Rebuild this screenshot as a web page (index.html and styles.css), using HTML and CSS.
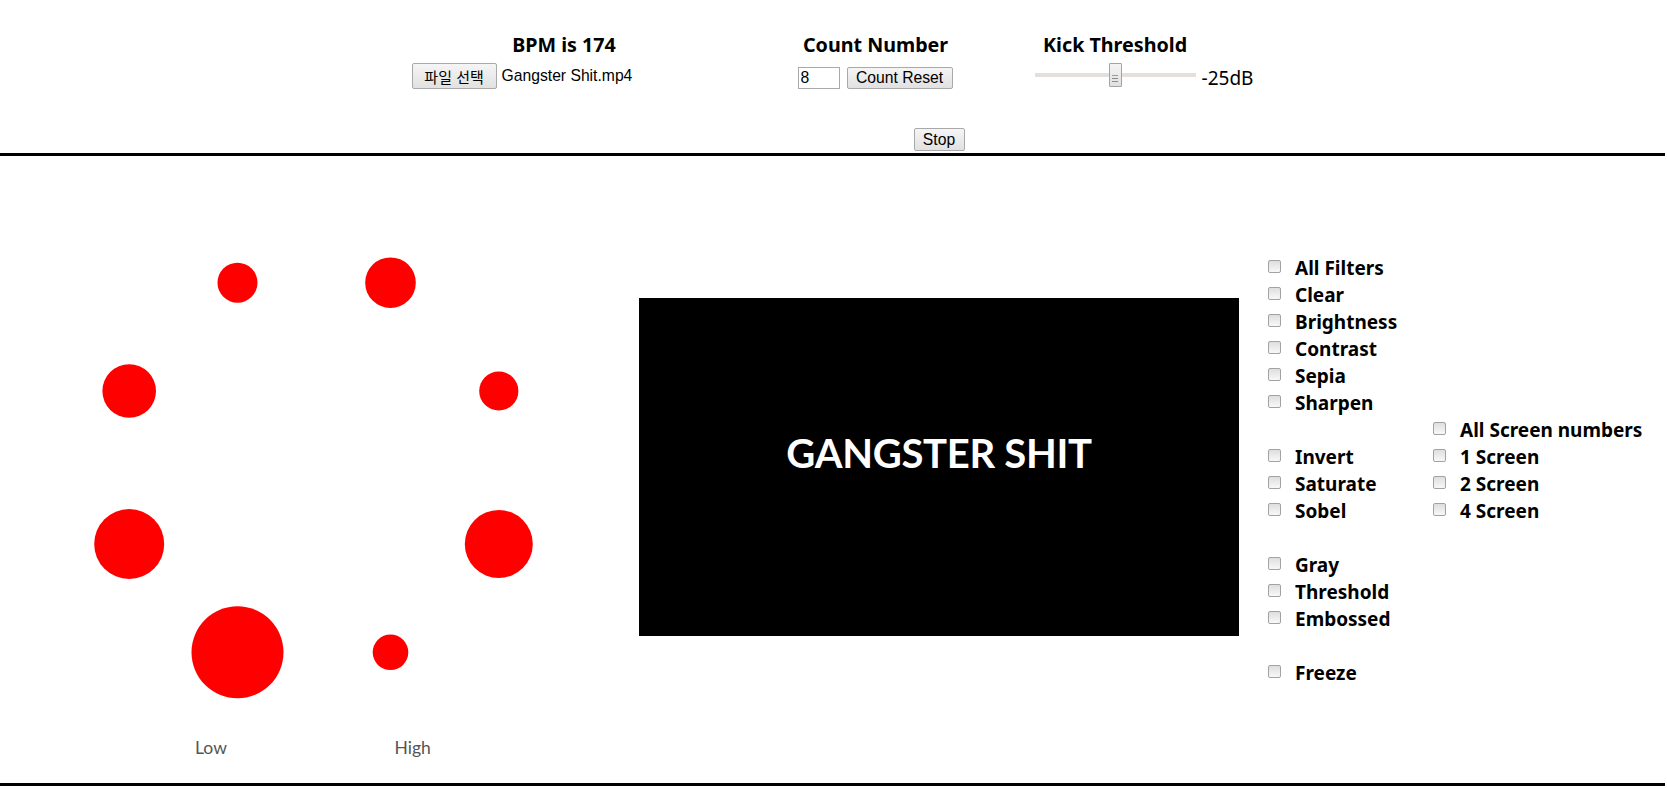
FILE: index.html
```html
<!DOCTYPE html>
<html lang="ko">
<head>
<meta charset="utf-8">
<title>Beat Visualizer</title>
<link rel="stylesheet" href="styles.css">
</head>
<body>
<header class="top">
  <div class="controls">
    <section class="ctl ctl-file">
      <h3 class="ctl-title">BPM is 174</h3>
      <div class="ctl-row">
        <button class="btn btn-file" type="button">파일 선택</button>
        <span class="file-name">Gangster Shit.mp4</span>
      </div>
    </section>
    <section class="ctl ctl-count">
      <h3 class="ctl-title">Count Number</h3>
      <div class="ctl-row">
        <input class="num" type="text" value="8">
        <button class="btn btn-reset" type="button">Count Reset</button>
      </div>
    </section>
    <section class="ctl ctl-kick">
      <h3 class="ctl-title">Kick Threshold</h3>
      <input class="range" type="range" min="-50" max="0" value="-25">
      <span class="db">-25dB</span>
    </section>
  </div>
  <div class="stop-row">
    <button class="btn btn-stop" type="button">Stop</button>
  </div>
</header>

<main class="stage">
  <svg class="viz" viewBox="0 0 639 627" width="639" height="627" role="img" aria-label="Beat visualizer">
    <g class="viz-dots">
      <circle cx="237.5" cy="126.7" r="20"/>
      <circle cx="390.5" cy="126.7" r="25.3"/>
      <circle cx="129.2" cy="235" r="26.8"/>
      <circle cx="498.8" cy="235" r="19.6"/>
      <circle cx="129.2" cy="388" r="35"/>
      <circle cx="498.8" cy="388" r="34"/>
      <circle cx="237.5" cy="496.3" r="46"/>
      <circle cx="390.5" cy="496.3" r="17.8"/>
    </g>
    <text class="viz-label" x="195" y="598">Low</text>
    <text class="viz-label" x="394.5" y="598">High</text>
  </svg>

  <div class="video">
    <span class="video-title">GANGSTER SHIT</span>
  </div>

  <div class="filters">
    <div class="filter-col filter-col-main">
      <div class="group">
        <label class="opt"><input type="checkbox"><span>All Filters</span></label>
        <label class="opt"><input type="checkbox"><span>Clear</span></label>
        <label class="opt"><input type="checkbox"><span>Brightness</span></label>
        <label class="opt"><input type="checkbox"><span>Contrast</span></label>
        <label class="opt"><input type="checkbox"><span>Sepia</span></label>
        <label class="opt"><input type="checkbox"><span>Sharpen</span></label>
      </div>
      <div class="group">
        <label class="opt"><input type="checkbox"><span>Invert</span></label>
        <label class="opt"><input type="checkbox"><span>Saturate</span></label>
        <label class="opt"><input type="checkbox"><span>Sobel</span></label>
      </div>
      <div class="group">
        <label class="opt"><input type="checkbox"><span>Gray</span></label>
        <label class="opt"><input type="checkbox"><span>Threshold</span></label>
        <label class="opt"><input type="checkbox"><span>Embossed</span></label>
      </div>
      <div class="group">
        <label class="opt"><input type="checkbox"><span>Freeze</span></label>
      </div>
    </div>
    <div class="filter-col filter-col-screens">
      <div class="group">
        <label class="opt"><input type="checkbox"><span>All Screen numbers</span></label>
        <label class="opt"><input type="checkbox"><span>1 Screen</span></label>
        <label class="opt"><input type="checkbox"><span>2 Screen</span></label>
        <label class="opt"><input type="checkbox"><span>4 Screen</span></label>
      </div>
    </div>
  </div>
</main>
</body>
</html>
```

FILE: styles.css
```css
* {
  box-sizing: border-box;
}

html,
body {
  margin: 0;
  padding: 0;
  background: #fff;
}

body {
  font-family: "Noto Sans", "Noto Sans CJK KR", sans-serif;
  color: #000;
  overflow: hidden;
}

/* ---------- header ---------- */
.top {
  width: calc(100% - 2px);
  height: 156px;
  padding-top: 33px;
  border-bottom: 3px solid #000;
}

.controls {
  display: flex;
  justify-content: center;
  align-items: flex-start;
  gap: 81px;
}

.ctl-title {
  margin: 0;
  font-size: 19.7px;
  font-weight: 700;
  line-height: 24px;
  text-align: center;
  white-space: nowrap;
}

.ctl-file {
  width: 305px;
}

.ctl-count {
  width: 156px;
}

.ctl-row {
  display: flex;
  align-items: center;
}

.ctl-file .ctl-row {
  margin-top: 6px;
  gap: 5px;
}

.ctl-count .ctl-row {
  margin-top: 10px;
  gap: 7px;
}

.ctl-kick {
  display: grid;
  grid-template-columns: 161px auto;
  column-gap: 6px;
  align-items: start;
}

.btn {
  margin: 0;
  padding: 0;
  font-family: "Liberation Sans", "Noto Sans CJK KR", Arial, sans-serif;
  font-size: 15.7px;
  color: #000;
  background: linear-gradient(#f5f5f5, #e1e1e1);
  border: 1px solid #a9a9a9;
  border-radius: 2px;
}

.btn-file {
  width: 85px;
  height: 26px;
  font-size: 15px;
}

.btn-reset {
  width: 106px;
  height: 22px;
}

.btn-stop {
  width: 51px;
  height: 23px;
}

.file-name {
  font-family: "Liberation Sans", Arial, sans-serif;
  font-size: 15.7px;
  white-space: nowrap;
}

.num {
  margin: 0;
  width: 42px;
  height: 22px;
  padding: 0 2px;
  border: 1px solid #a9a9a9;
  font-family: "Liberation Sans", Arial, sans-serif;
  font-size: 15.7px;
  color: #000;
}

.range {
  -webkit-appearance: none;
  appearance: none;
  grid-column: 1;
  width: 161px;
  height: 24px;
  margin: 6px 0 0;
  padding: 0;
  background: transparent;
}

.range::-webkit-slider-runnable-track {
  height: 4px;
  background: #e3e0db;
  border: none;
}

.range::-webkit-slider-thumb {
  -webkit-appearance: none;
  width: 13px;
  height: 24px;
  margin-top: -10px;
  border: 1px solid #a3a3a3;
  border-radius: 1px;
  background:
    linear-gradient(#9a9a9a, #9a9a9a) center 11px / 6px 1px no-repeat,
    linear-gradient(#8a8a8a, #8a8a8a) center 14px / 6px 1px no-repeat,
    linear-gradient(#8a8a8a, #8a8a8a) center 17px / 6px 1px no-repeat,
    linear-gradient(#f4f4f4, #e0e0e0);
}

.db {
  grid-column: 2;
  margin-top: 9px;
  font-size: 19px;
  line-height: 24px;
  white-space: nowrap;
}

.stop-row {
  display: flex;
  justify-content: center;
  width: 600px;
  margin: 38px 0 0 639px;
}

/* ---------- stage ---------- */
.stage {
  display: flex;
  align-items: center;
  width: calc(100% - 2px);
  height: 630px;
  border-bottom: 3px solid #000;
}

.viz {
  flex: none;
  display: block;
  width: 639px;
  height: 627px;
}

.viz-dots {
  fill: #ff0000;
}

.viz-label {
  font-family: Lato, "Liberation Sans", sans-serif;
  font-size: 17.5px;
  fill: #555;
}

.video {
  flex: none;
  width: 600px;
  height: 338px;
  margin-bottom: 5px;
  padding-bottom: 28px;
  background: #000;
  display: flex;
  align-items: center;
  justify-content: center;
}

.video-title {
  font-family: Lato, "Open Sans", sans-serif;
  font-weight: 700;
  font-size: 40px;
  letter-spacing: -0.3px;
  color: #fff;
  white-space: nowrap;
}

.filters {
  flex: none;
  display: flex;
  align-items: flex-start;
  margin: 2px 0 0 29px;
}

.filter-col {
  display: flex;
  flex-direction: column;
  gap: 27px;
}

.filter-col-main {
  width: 165px;
}

.filter-col-screens {
  padding-top: 162px;
}

.group {
  display: flex;
  flex-direction: column;
}

.opt {
  display: flex;
  align-items: flex-start;
  gap: 14px;
  height: 27px;
  font-size: 19px;
  font-weight: 700;
  line-height: 27px;
  white-space: nowrap;
}

.opt input {
  -webkit-appearance: none;
  appearance: none;
  flex: none;
  width: 13px;
  height: 13px;
  margin: 5.5px 0 0;
  border: 1px solid #a2a2a2;
  border-radius: 2px;
  background: linear-gradient(#dedede, #f8f8f8);
}
```
